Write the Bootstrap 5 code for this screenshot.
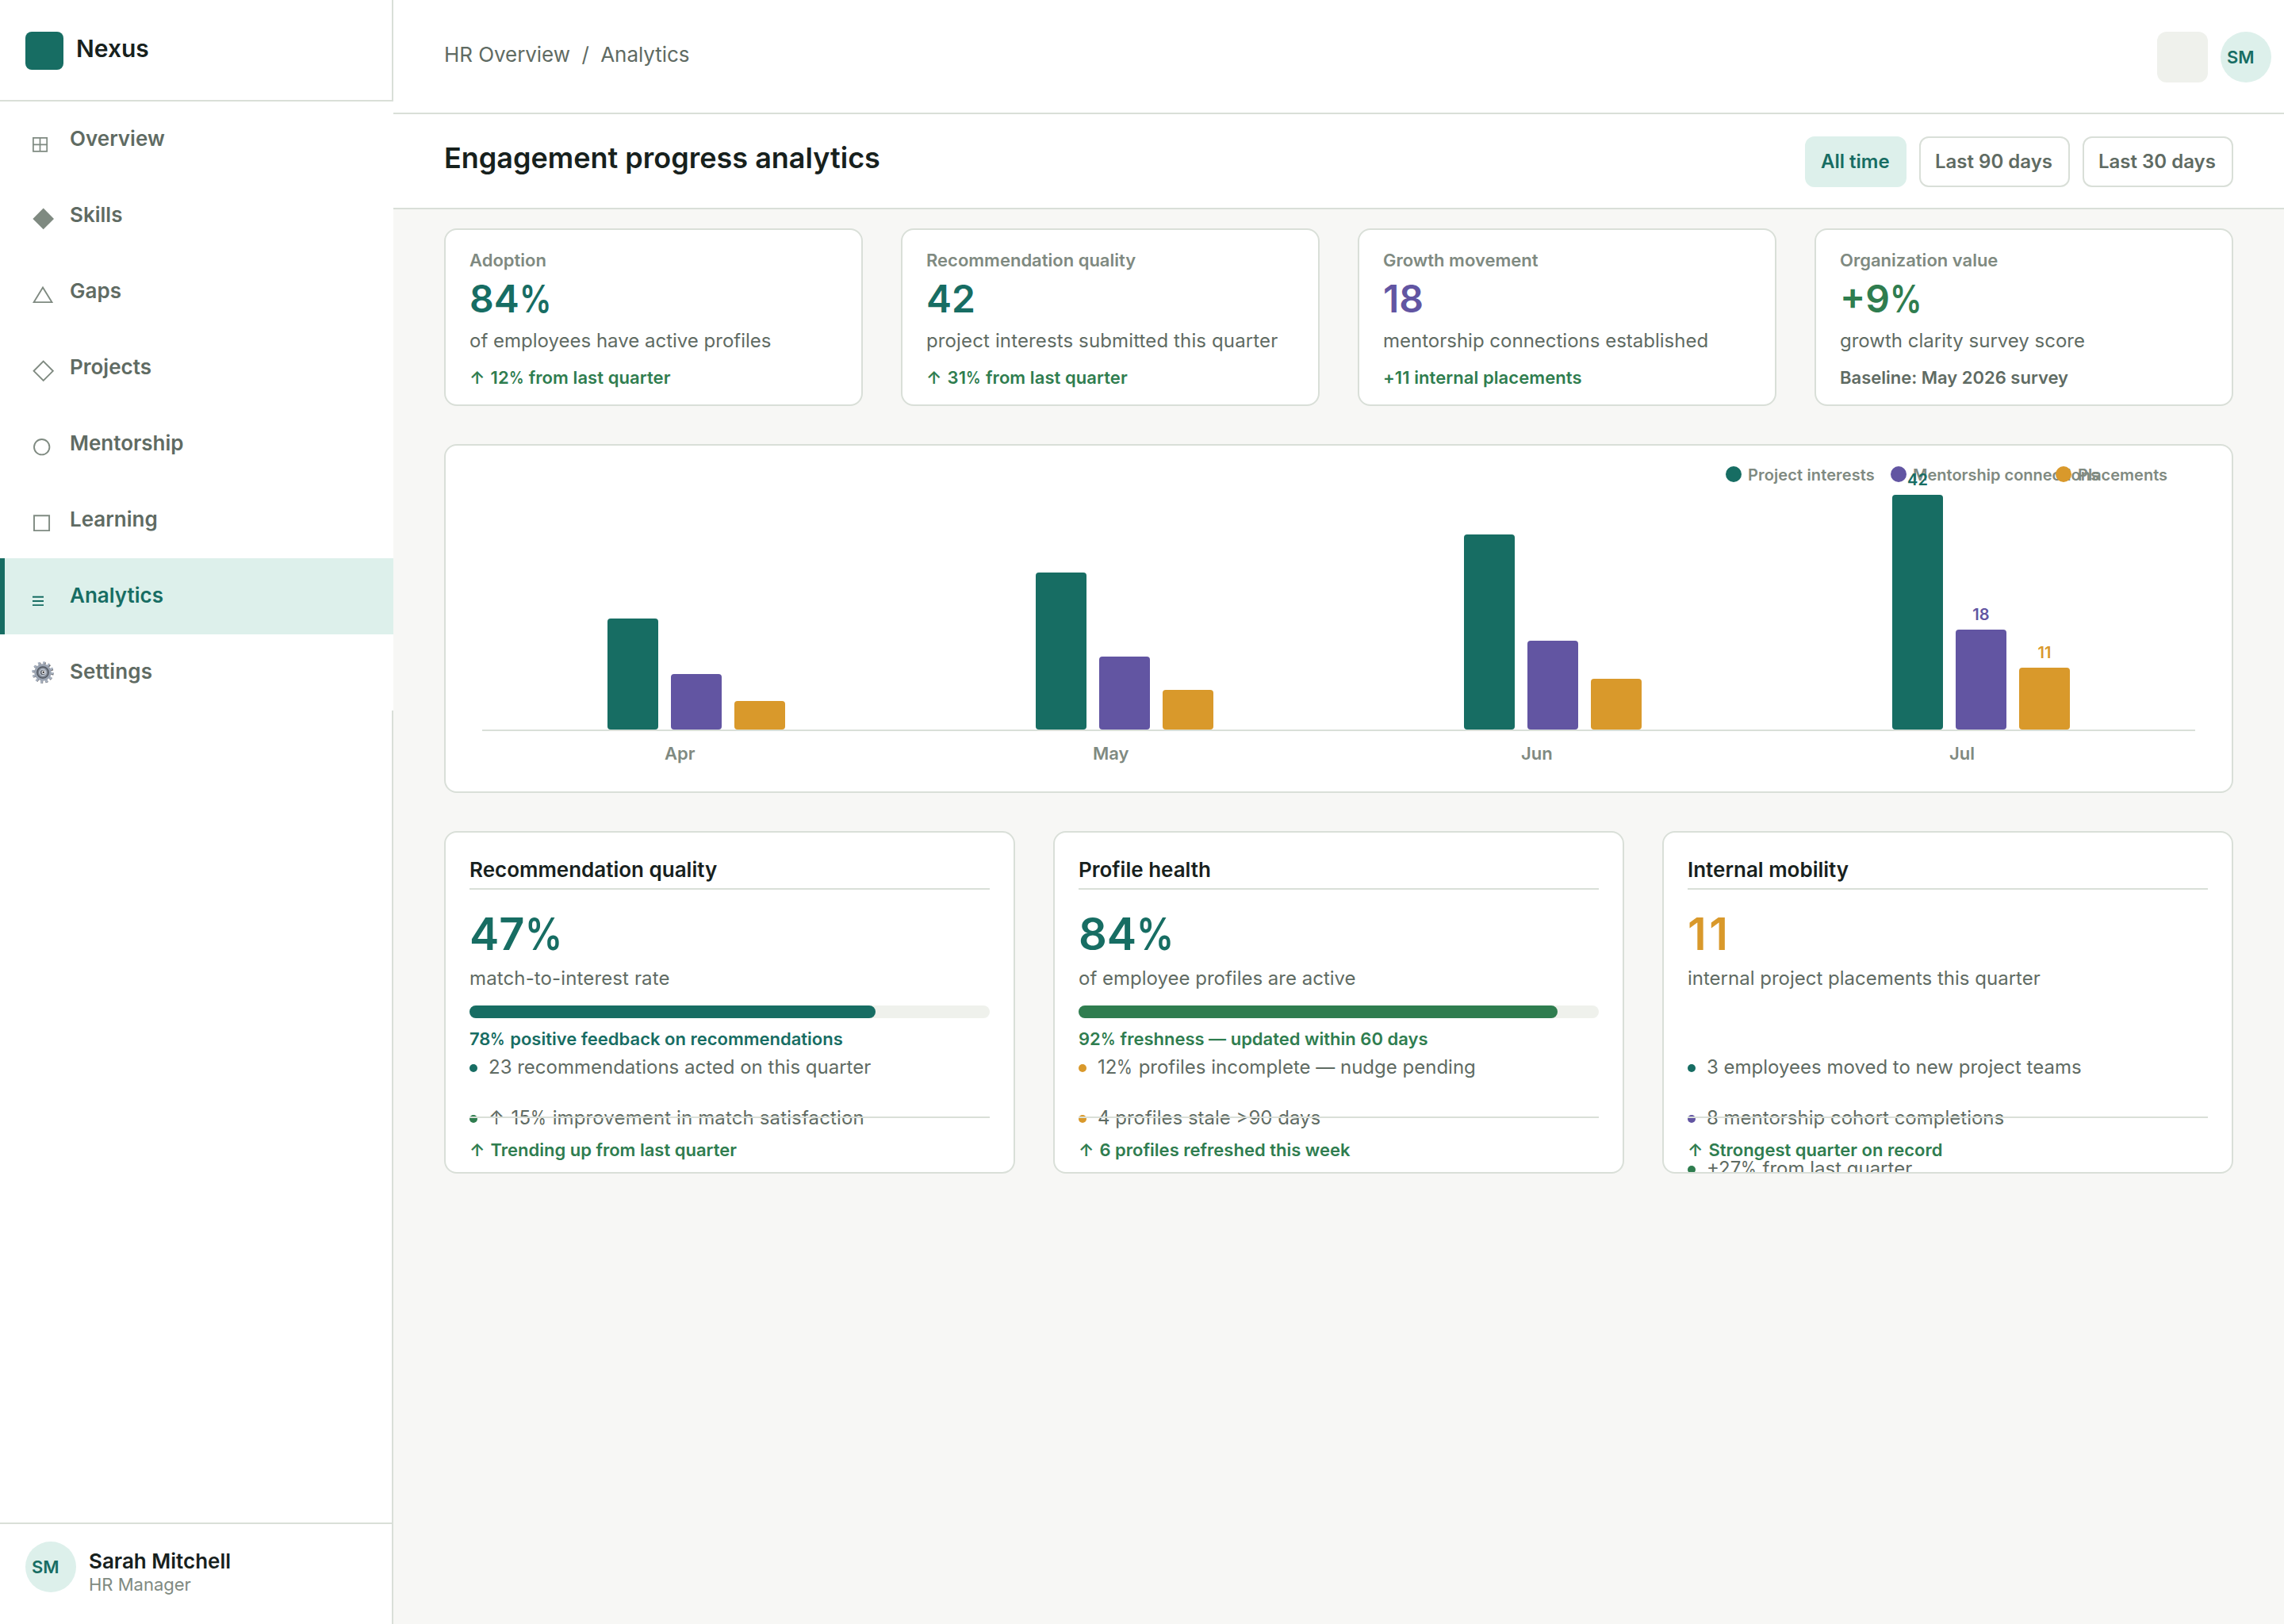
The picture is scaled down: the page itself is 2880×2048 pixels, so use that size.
<!DOCTYPE html>
<html lang="en">
<head>
    <meta charset="UTF-8">
    <meta name="viewport" content="width=device-width, initial-scale=1.0">
    <title>Nexus - Engagement progress analytics</title>
    <link href="https://cdn.jsdelivr.net/npm/bootstrap@5.3.0/dist/css/bootstrap.min.css" rel="stylesheet">
    <style>
        :root {
            --ink: #17211d;
            --text: #5f6b63;
            --muted: #7f8a81;
            --line: #d9dfd8;
            --teal: #176d63;
            --teal-soft: #ddf0eb;
            --purple: #6255a2;
            --amber: #d9992b;
            --green: #2f7d4f;
            --track: #eff1ec;
        }

        body {
            font-family: Inter, "Liberation Sans", sans-serif;
            background-color: #f7f7f5;
            color: var(--text);
        }

        .app { height: 2048px; }

        /* Text sizes */
        .t20 { font-size: 20px; line-height: 24px; }
        .t22 { font-size: 22px; line-height: 26px; }
        .t24 { font-size: 24px; line-height: 29px; }
        .t26 { font-size: 26px; line-height: 31px; }
        .t30 { font-size: 30px; line-height: 36px; }
        .t36 { font-size: 36px; line-height: 44px; }
        .t48 { font-size: 48px; line-height: 59px; }
        .t56 { font-size: 56px; line-height: 68px; }

        .c-ink { color: var(--ink); }
        .c-muted { color: var(--muted); }
        .c-teal { color: var(--teal); }
        .c-purple { color: var(--purple); }
        .c-amber { color: var(--amber); }
        .c-green { color: var(--green); }
        .bg-teal { background-color: var(--teal); }
        .bg-purple { background-color: var(--purple); }
        .bg-amber { background-color: var(--amber); }
        .bg-green { background-color: var(--green); }

        /* Narrow percent sign and slightly wider arrow */
        .pct {
            display: inline-block;
            margin-right: -.13em;
            transform: scaleX(.84);
            transform-origin: left;
        }
        .up { margin-right: 1.5px; }
        .loose { letter-spacing: .13px; }
        .ones { letter-spacing: 3.5px; }

        /* Sidebar */
        .sidebar {
            width: 496px;
            border-right: 2px solid var(--line);
        }
        .brand {
            height: 128px;
            padding: 40px 32px 0;
            gap: 16px;
            border-bottom: 2px solid var(--line);
        }
        .brand-logo {
            width: 48px;
            height: 48px;
            border-radius: 8px;
        }
        .brand-name { margin-top: 3px; }
        .side-item {
            height: 96px;
            margin-right: -2px;
            padding: 31px 0 0 34px;
            gap: 16px;
            border-left: 6px solid transparent;
            background: #fff;
            color: var(--text);
            text-decoration: none;
        }
        .side-item svg {
            width: 32px;
            height: 36px;
            margin-top: 3px;
            color: var(--muted);
            fill: none;
            stroke: currentColor;
        }
        .side-item.current {
            background: var(--teal-soft);
            border-left-color: var(--teal);
            color: var(--teal);
        }
        .side-item.current svg { color: var(--teal); }
        .user-box {
            height: 128px;
            padding: 22px 32px 0;
            gap: 16px;
            border-top: 2px solid var(--line);
        }
        .user-name { margin-top: 9px; }
        .user-role { margin-top: 1px; }
        .avatar {
            width: 64px;
            height: 64px;
            padding: 19px 0 0 8px;
            background: var(--teal-soft);
            color: var(--teal);
        }

        /* Header rows */
        .topbar {
            height: 144px;
            padding: 40px 16px 0 64px;
            border-bottom: 2px solid var(--line);
        }
        .crumbs {
            margin-top: 13px;
            white-space: pre;
            letter-spacing: -.06px;
        }
        .icon-box {
            width: 64px;
            height: 64px;
            border-radius: 12px;
            background: var(--track);
        }
        .titlebar {
            height: 120px;
            padding: 28px 64px 0;
            border-bottom: 2px solid var(--line);
        }
        .titlebar h1 { margin-top: 5px; }
        .range-btn {
            height: 64px;
            padding: 15px 0 0 18px;
            width: 190px;
            border: 2px solid var(--line);
            border-radius: 12px;
            background: #fff;
            color: var(--text);
        }
        .range-btn.chosen {
            width: 128px;
            border-color: var(--teal-soft);
            background: var(--teal-soft);
            color: var(--teal);
        }

        /* Panels */
        .content {
            padding: 24px 64px;
            gap: 48px;
        }
        .panel {
            border: 2px solid var(--line);
            border-radius: 16px;
            background: #fff;
            overflow: hidden;
        }
        .kpi-row {
            display: grid;
            grid-template-columns: repeat(4, 1fr);
            gap: 48px;
        }
        .kpi {
            height: 224px;
            padding: 25px 30px 0;
        }
        .kpi-value { margin-top: 6px; }
        .kpi-text { margin-top: 9px; }
        .kpi-delta { margin-top: 19px; }
        .kpi-delta.c-green { letter-spacing: .07px; }

        /* Chart */
        .chart { height: 440px; padding: 0 46px; }
        .chart-legend { top: 25px; right: 14px; }
        .legend-item { width: 208px; gap: 8px; white-space: nowrap; }
        .legend-item i {
            flex: none;
            width: 20px;
            height: 20px;
            margin-top: 1px;
            border-radius: 50%;
        }
        .plot {
            height: 360px;
            border-bottom: 2px solid var(--line);
            z-index: 1;
        }
        .bar-group { gap: 16px; }
        .bar {
            width: 64px;
            border-radius: 4px;
        }
        .bar-value { margin-bottom: 7px; }
        .month { padding: 15px 0 0 230px; }

        /* Detail cards */
        .detail-row {
            display: grid;
            grid-template-columns: repeat(3, 1fr);
            gap: 48px;
        }
        .detail {
            height: 432px;
            padding: 31px 30px 0;
        }
        .detail h2 {
            padding-bottom: 8px;
            border-bottom: 2px solid var(--line);
        }
        .detail-value { margin-top: 22px; }
        .detail-text { margin-top: 7px; }
        .detail-meter { height: 75px; padding-top: 20px; }
        .meter {
            height: 16px;
            margin-bottom: 13px;
            border-radius: 8px;
            background: var(--track);
        }
        .meter div { height: 16px; border-radius: 8px; }
        .points {
            height: 77px;
            margin-top: 8px;
        }
        .points li { height: 64px; gap: 14px; }
        .points i {
            width: 10px;
            height: 10px;
            margin-top: 11px;
            border-radius: 50%;
        }
        .detail-foot {
            padding-top: 27px;
            border-top: 2px solid var(--line);
        }
    </style>
</head>
<body>
    <div class="app d-flex">
        <!-- Sidebar -->
        <aside class="sidebar bg-white d-flex flex-column flex-shrink-0">
            <div class="brand d-flex align-items-start">
                <div class="brand-logo bg-teal"></div>
                <div class="brand-name t30 fw-semibold c-ink">Nexus</div>
            </div>
            <nav class="d-flex flex-column">
                <a href="#" class="side-item d-flex t26 fw-semibold">
                    <svg viewBox="0 0 32 36" stroke-width="1.7"><path d="M1.9 11.9H19.2V28.9H1.9ZM10.5 11.9V28.9M1.9 20.4H19.2"/></svg>
                    <span>Overview</span>
                </a>
                <a href="#" class="side-item d-flex t26 fw-semibold">
                    <svg viewBox="0 0 32 36"><path fill="currentColor" stroke="none" d="M14.7 4.6L28 17.9L14.7 31.2L1.4 17.9Z"/></svg>
                    <span>Skills</span>
                </a>
                <a href="#" class="side-item d-flex t26 fw-semibold">
                    <svg viewBox="0 0 32 36" stroke-width="1.9"><path d="M14 8.6L25.4 27.1H2.7Z"/></svg>
                    <span>Gaps</span>
                </a>
                <a href="#" class="side-item d-flex t26 fw-semibold">
                    <svg viewBox="0 0 32 36" stroke-width="1.9"><path d="M14.7 5.7L26.8 17.8L14.7 29.9L2.6 17.8Z"/></svg>
                    <span>Projects</span>
                </a>
                <a href="#" class="side-item d-flex t26 fw-semibold">
                    <svg viewBox="0 0 32 36" stroke-width="1.9"><circle cx="12.7" cy="17.7" r="9.7"/></svg>
                    <span>Mentorship</span>
                </a>
                <a href="#" class="side-item d-flex t26 fw-semibold">
                    <svg viewBox="0 0 32 36" stroke-width="1.9"><path d="M3 8.3H22.1V27.1H3Z"/></svg>
                    <span>Learning</span>
                </a>
                <a href="#" class="side-item current d-flex t26 fw-semibold">
                    <svg viewBox="0 0 32 36" stroke-width="1.9"><path d="M1 14.7H15M1 20H15M1 25.1H15"/></svg>
                    <span>Analytics</span>
                </a>
                <a href="#" class="side-item d-flex t26 fw-semibold">
                    <svg viewBox="0 0 32 36">
                        <circle cx="14.3" cy="14.4" r="11.8" stroke="#4d4b4c" stroke-width="3" stroke-dasharray="2.9 3.28"/>
                        <circle cx="13.9" cy="13.9" r="12" stroke="#a9b3c2" stroke-width="3.4" stroke-dasharray="2.6 3.68"/>
                        <circle cx="14" cy="14" r="9" fill="#7b828d" stroke="#9aa3b1" stroke-width="3.4"/>
                        <circle cx="14" cy="14" r="7.2" stroke="#4e545d" stroke-width="1.3"/>
                        <circle cx="14" cy="14" r="4" fill="#5d636c" stroke="#b4bcc8" stroke-width="1.8"/>
                        <circle cx="14.8" cy="13.8" r="1.8" fill="#3d3a3a" stroke="#f2f3f5" stroke-width="1.1"/>
                    </svg>
                    <span class="loose">Settings</span>
                </a>
            </nav>
            <div class="user-box d-flex mt-auto">
                <div class="avatar rounded-circle t22 fw-semibold">SM</div>
                <div>
                    <div class="user-name t26 fw-semibold c-ink">Sarah Mitchell</div>
                    <div class="user-role t22 c-muted">HR Manager</div>
                </div>
            </div>
        </aside>

        <!-- Main -->
        <main class="flex-grow-1">
            <header class="topbar bg-white d-flex justify-content-between align-items-start">
                <div class="crumbs t26">HR Overview  /  Analytics</div>
                <div class="d-flex gap-3">
                    <div class="icon-box"></div>
                    <div class="avatar rounded-circle t22 fw-semibold">SM</div>
                </div>
            </header>
            <div class="titlebar bg-white d-flex justify-content-between align-items-start">
                <h1 class="t36 fw-semibold c-ink mb-0">Engagement progress analytics</h1>
                <div class="d-flex gap-3">
                    <div class="range-btn chosen t24 fw-semibold" role="button">All time</div>
                    <div class="range-btn t24 fw-semibold" role="button">Last 90 days</div>
                    <div class="range-btn t24 fw-semibold" role="button">Last 30 days</div>
                </div>
            </div>

            <div class="content d-flex flex-column">
                <!-- KPI cards -->
                <section class="kpi-row">
                    <div class="panel kpi">
                        <div class="t22 fw-semibold c-muted">Adoption</div>
                        <div class="kpi-value t48 fw-semibold c-teal">84<span class="pct">%</span></div>
                        <div class="kpi-text t24">of employees have active profiles</div>
                        <div class="kpi-delta t22 fw-semibold c-green"><span class="up">↑</span> 12<span class="pct">%</span> from last quarter</div>
                    </div>
                    <div class="panel kpi">
                        <div class="t22 fw-semibold c-muted">Recommendation quality</div>
                        <div class="kpi-value t48 fw-semibold c-teal">42</div>
                        <div class="kpi-text t24 loose">project interests submitted this quarter</div>
                        <div class="kpi-delta t22 fw-semibold c-green"><span class="up">↑</span> 31<span class="pct">%</span> from last quarter</div>
                    </div>
                    <div class="panel kpi">
                        <div class="t22 fw-semibold c-muted">Growth movement</div>
                        <div class="kpi-value t48 fw-semibold c-purple">18</div>
                        <div class="kpi-text t24">mentorship connections established</div>
                        <div class="kpi-delta t22 fw-semibold c-green">+11 internal placements</div>
                    </div>
                    <div class="panel kpi">
                        <div class="t22 fw-semibold c-muted">Organization value</div>
                        <div class="kpi-value t48 fw-semibold c-green">+9<span class="pct">%</span></div>
                        <div class="kpi-text t24">growth clarity survey score</div>
                        <div class="kpi-delta t22 fw-semibold">Baseline: May 2026 survey</div>
                    </div>
                </section>

                <!-- Monthly chart -->
                <section class="panel chart position-relative">
                    <div class="chart-legend position-absolute d-flex t20 fw-semibold c-muted">
                        <div class="legend-item d-flex"><i class="bg-teal"></i><span class="loose">Project interests</span></div>
                        <div class="legend-item d-flex"><i class="bg-purple"></i><span>Mentorship connections</span></div>
                        <div class="legend-item d-flex"><i class="bg-amber"></i><span>Placements</span></div>
                    </div>
                    <div class="plot row g-0 position-relative">
                        <div class="bar-group col d-flex justify-content-center align-items-end">
                            <div class="bar bg-teal" style="height: 140px"></div>
                            <div class="bar bg-purple" style="height: 70px"></div>
                            <div class="bar bg-amber" style="height: 36px"></div>
                        </div>
                        <div class="bar-group col d-flex justify-content-center align-items-end">
                            <div class="bar bg-teal" style="height: 198px"></div>
                            <div class="bar bg-purple" style="height: 92px"></div>
                            <div class="bar bg-amber" style="height: 50px"></div>
                        </div>
                        <div class="bar-group col d-flex justify-content-center align-items-end">
                            <div class="bar bg-teal" style="height: 246px"></div>
                            <div class="bar bg-purple" style="height: 112px"></div>
                            <div class="bar bg-amber" style="height: 64px"></div>
                        </div>
                        <div class="bar-group col d-flex justify-content-center align-items-end t20 fw-semibold text-center">
                            <div>
                                <div class="bar-value c-teal">42</div>
                                <div class="bar bg-teal" style="height: 296px"></div>
                            </div>
                            <div>
                                <div class="bar-value c-purple">18</div>
                                <div class="bar bg-purple" style="height: 126px"></div>
                            </div>
                            <div>
                                <div class="bar-value c-amber">11</div>
                                <div class="bar bg-amber" style="height: 78px"></div>
                            </div>
                        </div>
                    </div>
                    <div class="row g-0 t22 fw-semibold c-muted">
                        <div class="month col">Apr</div>
                        <div class="month col">May</div>
                        <div class="month col">Jun</div>
                        <div class="month col">Jul</div>
                    </div>
                </section>

                <!-- Detail cards -->
                <section class="detail-row">
                    <div class="panel detail">
                        <h2 class="t26 fw-semibold c-ink mb-0">Recommendation quality</h2>
                        <div class="detail-value t56 fw-semibold c-teal">47<span class="pct">%</span></div>
                        <div class="detail-text t24 loose">match-to-interest rate</div>
                        <div class="detail-meter">
                            <div class="meter"><div class="bg-teal" style="width: 78%"></div></div>
                            <div class="t22 fw-semibold c-teal">78<span class="pct">%</span> positive feedback on recommendations</div>
                        </div>
                        <ul class="points list-unstyled mb-0 t24">
                            <li class="d-flex"><i class="bg-teal"></i><span>23 recommendations acted on this quarter</span></li>
                            <li class="d-flex"><i class="bg-green"></i><span class="loose"><span class="up">↑</span> 15<span class="pct">%</span> improvement in match satisfaction</span></li>
                        </ul>
                        <div class="detail-foot position-relative t22 fw-semibold c-green"><span class="up">↑</span> Trending up from last quarter</div>
                    </div>
                    <div class="panel detail">
                        <h2 class="t26 fw-semibold c-ink mb-0">Profile health</h2>
                        <div class="detail-value t56 fw-semibold c-teal">84<span class="pct">%</span></div>
                        <div class="detail-text t24">of employee profiles are active</div>
                        <div class="detail-meter">
                            <div class="meter"><div class="bg-green" style="width: 92%"></div></div>
                            <div class="t22 fw-semibold c-green">92<span class="pct">%</span> freshness — updated within 60 days</div>
                        </div>
                        <ul class="points list-unstyled mb-0 t24">
                            <li class="d-flex"><i class="bg-amber"></i><span>12<span class="pct">%</span> profiles incomplete — nudge pending</span></li>
                            <li class="d-flex"><i class="bg-amber"></i><span>4 profiles stale &gt;90 days</span></li>
                        </ul>
                        <div class="detail-foot position-relative t22 fw-semibold c-green"><span class="up">↑</span> 6 profiles refreshed this week</div>
                    </div>
                    <div class="panel detail">
                        <h2 class="t26 fw-semibold c-ink mb-0">Internal mobility</h2>
                        <div class="detail-value t56 fw-semibold c-amber ones">11</div>
                        <div class="detail-text t24">internal project placements this quarter</div>
                        <div class="detail-meter"></div>
                        <ul class="points list-unstyled mb-0 t24">
                            <li class="d-flex"><i class="bg-teal"></i><span>3 employees moved to new project teams</span></li>
                            <li class="d-flex"><i class="bg-purple"></i><span>8 mentorship cohort completions</span></li>
                            <li class="d-flex"><i class="bg-green"></i><span>+27<span class="pct">%</span> from last quarter</span></li>
                        </ul>
                        <div class="detail-foot position-relative t22 fw-semibold c-green"><span class="up">↑</span> Strongest quarter on record</div>
                    </div>
                </section>
            </div>
        </main>
    </div>

    <script src="https://cdn.jsdelivr.net/npm/bootstrap@5.3.0/dist/js/bootstrap.bundle.min.js"></script>
</body>
</html>
